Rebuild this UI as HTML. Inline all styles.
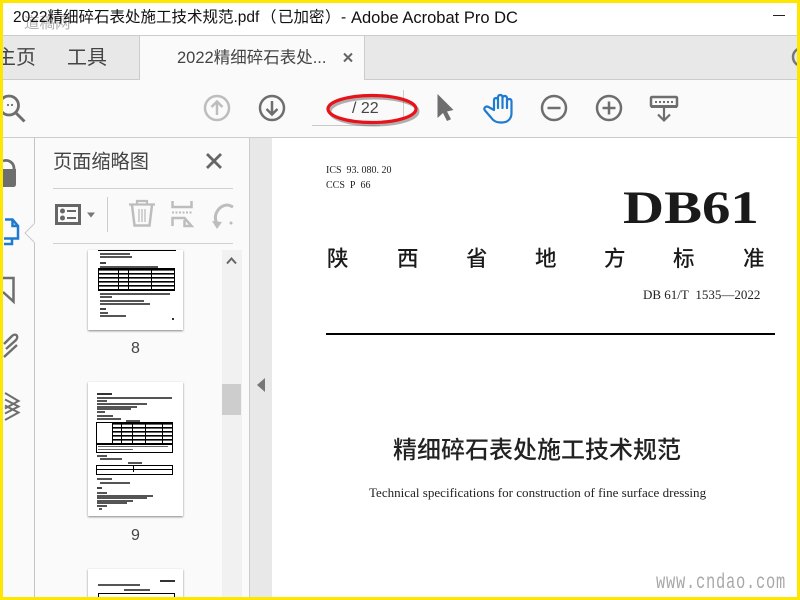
<!DOCTYPE html>
<html lang="zh">
<head>
<meta charset="utf-8">
<style>
html,body{margin:0;padding:0;width:800px;height:600px;overflow:hidden;background:#fff}
body{position:relative;font-family:"Liberation Sans","Noto Sans CJK SC",sans-serif}
.a{position:absolute;white-space:nowrap}
.r{position:absolute}
.l{position:absolute;height:2px;background:#000}
.t{position:absolute;background:#000;height:2px}
svg{position:absolute;overflow:visible}
.tt{font-size:15.5px;line-height:18px;color:#111;top:9px}
.p{font-size:21.5px;line-height:26px;color:#1a1a1a;top:246px;font-weight:500}
.tb{background-image:repeating-linear-gradient(#000 0 1px,#666 1px 2px,#fff 2px 4px)}
</style>
</head>
<body>
<!-- backgrounds -->
<div class="r" style="left:0;top:35px;width:800px;height:1px;background:#ccc"></div>
<div class="r" style="left:0;top:36px;width:800px;height:43px;background:#e8e8e8"></div>
<div class="r" style="left:0;top:79px;width:800px;height:1px;background:#ccc"></div>
<div class="r" style="left:0;top:80px;width:800px;height:57px;background:#fafafa"></div>
<div class="r" style="left:139px;top:36px;width:226px;height:44px;background:#fafafa;border-left:1px solid #ccc;border-right:1px solid #ccc;box-sizing:border-box"></div>
<div class="r" style="left:0;top:137px;width:800px;height:1px;background:#ccc"></div>
<div class="r" style="left:0;top:138px;width:249px;height:462px;background:#fafafa"></div>
<div class="r" style="left:34px;top:138px;width:1px;height:462px;background:#c4c4c4"></div>
<div class="r" style="left:249px;top:138px;width:23px;height:462px;background:#e8e8e8;border-left:1px solid #ccc;box-sizing:border-box"></div>
<div class="r" style="left:272px;top:138px;width:528px;height:462px;background:#fff"></div>

<!-- title bar -->
<div class="a" style="left:24px;top:15px;font-size:15.5px;line-height:18px;color:#888;opacity:.65">道稿网</div>
<div class="a tt" style="left:13px">2022精细碎石表处施工技术规范.pdf</div>
<div class="a tt" style="left:261px">（</div>
<div class="a tt" style="left:278px">已加密</div>
<div class="a tt" style="left:325px">）</div>
<div class="a tt" style="left:341px">-</div>
<div class="a tt" style="left:351px;font-size:16.5px">Adobe Acrobat Pro DC</div>
<div class="r" style="left:773px;top:15px;width:12px;height:1px;background:#222"></div>

<!-- tabs -->
<div class="a" style="left:-4px;top:47px;font-size:20px;line-height:22px;color:#444">主页</div>
<div class="a" style="left:67px;top:47px;font-size:20px;line-height:22px;color:#444">工具</div>
<div class="a" style="left:177px;top:48px;font-size:16.5px;line-height:20px;color:#444">2022精细碎石表处...</div>
<svg style="left:0;top:0" width="800" height="600" fill="none">
  <path d="M344 53.500l8 8M352 53.500l-8 8" stroke="#666" stroke-width="2"/>
  <!-- right edge help circle -->
  <circle cx="802" cy="57" r="9" stroke="#777" stroke-width="2.500"/>
  <!-- search -->
  <circle cx="9" cy="105.500" r="9.500" stroke="#6e6e6e" stroke-width="2.800"/>
  <path d="M16 113l8.500 8.500" stroke="#6e6e6e" stroke-width="3"/>
  <circle cx="8" cy="105" r="1.100" fill="#6e6e6e"/><circle cx="12" cy="105" r="1.100" fill="#6e6e6e"/>
  <!-- up -->
  <circle cx="217" cy="108" r="12" stroke="#bdbdbd" stroke-width="2.500"/>
  <path d="M217 115v-13M211.500 107l5.500-5.500 5.500 5.500" stroke="#bdbdbd" stroke-width="2.500"/>
  <!-- down -->
  <circle cx="272" cy="108" r="12" stroke="#6e6e6e" stroke-width="2.500"/>
  <path d="M272 101v13M266.500 109l5.500 5.500 5.500-5.500" stroke="#6e6e6e" stroke-width="2.500"/>
  <!-- page input -->
  <path d="M312 125.500h68" stroke="#c8c8c8"/>
  <path d="M403.500 90v30" stroke="#ccc"/>
  <!-- red ellipse -->
  <ellipse cx="374" cy="111.500" rx="44" ry="13.500" stroke="#555" stroke-width="3" opacity=".45"/>
  <ellipse cx="372" cy="109" rx="44" ry="13.500" stroke="#e8121a" stroke-width="3.200"/>
  <!-- arrow -->
  <path d="M437.500 94v24l5.500-5 4 8 4-1.700-4-7.800 6.500-1.500z" fill="#6e6e6e"/>
  <!-- hand -->
  <path d="M494 110V100c0-2.700 4-2.700 4 0V97c0-2.700 4.500-2.700 4.500 0v1c0-2.700 4.500-2.700 4.500 0v3c0-2.700 4.500-2.700 4.500 0v12c0 6-4 9.500-9.500 9.500h-2c-4 0-6.500-1.500-9-5l-6-7c-2-2.500 1-5 3.500-3.500z" stroke="#1e7bd0" stroke-width="2.200" stroke-linejoin="round"/>
  <path d="M498 100v8M502.500 98v10M507 101v7" stroke="#1e7bd0" stroke-width="2.200" stroke-linecap="round"/>
  <!-- minus -->
  <circle cx="554" cy="108" r="12" stroke="#6e6e6e" stroke-width="2.500"/>
  <path d="M547.500 108h13" stroke="#6e6e6e" stroke-width="2.500"/>
  <!-- plus -->
  <circle cx="609" cy="108" r="12" stroke="#6e6e6e" stroke-width="2.500"/>
  <path d="M602.500 108h13M609 101.500v13" stroke="#6e6e6e" stroke-width="2.500"/>
  <!-- keyboard arrow -->
  <rect x="651" y="97" width="26" height="9.500" rx="1" stroke="#6e6e6e" stroke-width="2.500"/>
  <path d="M651 105h26v3h-26z" fill="#6e6e6e"/>
  <path d="M655 102h18" stroke="#6e6e6e" stroke-width="2" stroke-dasharray="2 2"/>
  <path d="M664 108v12M658 114.500l6 6 6-6" stroke="#6e6e6e" stroke-width="2.200"/>

  <!-- left rail -->
  <path d="M14 172v-4a8 8 0 0 0-11-7" stroke="#6e6e6e" stroke-width="2.800"/>
  <path d="M3 169h13v15c0 2-1 3-3 3H3z" fill="#6e6e6e"/>
  <path d="M5 219.500h7.500l5.500 6.500v12.500h-6V244H4M12.500 219.500v6.500H18M4 238.500h8" stroke="#1e7bd0" stroke-width="2.500"/>
  <path d="M3 278h10.500v23.500l-10.500-9.500" stroke="#6e6e6e" stroke-width="2.500"/>
  <path d="M4 344l8-8c4-3.500 7 .5 4 4l-10 9M17 345l-13 12" stroke="#6e6e6e" stroke-width="2.400"/>
  <path d="M5 393l13.500 8-13.500 7.500" stroke="#6e6e6e" stroke-width="2"/>
  <path d="M5 399.500l13.500 7-13.500 7" stroke="#6e6e6e" stroke-width="2"/>
  <path d="M5 405.500l13.500 7-13.500 7.500" stroke="#6e6e6e" stroke-width="2"/>
  <!-- pointer on rail -->
  <path d="M35 223l-10 10 10 10" fill="#fafafa" stroke="#c8c8c8"/>
  <path d="M35 223.500v19" stroke="#fafafa" stroke-width="1.500"/>

  <!-- panel close -->
  <path d="M207 154l14 14M221 154l-14 14" stroke="#666" stroke-width="2.800"/>
  <!-- panel toolbar -->
  <rect x="56.500" y="205.500" width="23" height="18" stroke="#666" stroke-width="3"/>
  <circle cx="62.500" cy="211" r="2.500" fill="#666"/><circle cx="62.500" cy="218" r="2.500" fill="#666"/>
  <path d="M67 211h9M67 218h9" stroke="#666" stroke-width="2"/>
  <path d="M87 212.500h8l-4 5z" fill="#777"/>
  <path d="M107.500 197v35" stroke="#ccc"/>
  <!-- trash -->
  <path d="M129 204.500h26M137 204v-3h10v3" stroke="#bdbdbd" stroke-width="2.200"/>
  <path d="M132 205l2.500 20.500h15l2.500-20.500" stroke="#bdbdbd" stroke-width="2.500"/>
  <path d="M139 209v13M142 209v13M145 209v13" stroke="#bdbdbd" stroke-width="1.300"/>
  <!-- split -->
  <path d="M172.500 201v6h19v-6" stroke="#bdbdbd" stroke-width="2.500"/>
  <path d="M172 212.500h21" stroke="#bdbdbd" stroke-width="2" stroke-dasharray="2 1.500"/>
  <path d="M172.500 226v-8h12l7 8h-7v-6" stroke="#bdbdbd" stroke-width="2.500"/>
  <!-- rotate -->
  <path d="M217 224c-5-10 3-19 10-19 2 0 4 1 6 2" stroke="#bdbdbd" stroke-width="3"/>
  <path d="M212 221l10 1-5 7z" fill="#bdbdbd"/>
  <circle cx="231" cy="223" r="1.500" fill="#bdbdbd"/>
  <!-- collapse arrow -->
  <path d="M265 378v14l-8-7z" fill="#777"/>
</svg>
<div class="a" style="left:352px;top:99px;font-size:16px;line-height:20px;color:#444">/ 22</div>

<!-- panel -->
<div class="a" style="left:53px;top:152px;font-size:19.2px;line-height:22px;color:#444">页面缩略图</div>
<div class="r" style="left:53px;top:188px;width:180px;height:1px;background:#d0d0d0"></div>
<div class="r" style="left:53px;top:243px;width:180px;height:1px;background:#d0d0d0"></div>

<!-- scrollbar -->
<div class="r" style="left:222px;top:250px;width:20px;height:350px;background:#f1f1f1"></div>
<div class="r" style="left:222px;top:384px;width:19px;height:31px;background:#cdcdcd"></div>
<svg style="left:0;top:0" width="800" height="600" fill="none"><path d="M227 263.500l4.500-5 4.500 5" stroke="#666" stroke-width="2"/></svg>

<!-- thumb 8 -->
<div class="r" style="left:88px;top:250px;width:95px;height:80px;background:#fff;box-shadow:0 1px 2px #888;overflow:hidden">
  <div class="t" style="left:10px;top:0;width:78px;height:1px"></div>
  <div class="t" style="left:12px;top:3px;width:30px;background:#555"></div>
  <div class="t" style="left:12px;top:6px;width:32px;background:#555"></div>
  <div class="t" style="left:12px;top:12px;width:6px;background:#444"></div>
  <div class="t" style="left:12px;top:16px;width:58px;background:#555"></div>
  <div class="r tb" style="left:10px;top:18px;width:77px;height:23px;border:1px solid #000;box-sizing:border-box"></div>
  <div class="r" style="left:30px;top:18px;width:1px;height:23px;background:#000"></div>
  <div class="r" style="left:40px;top:18px;width:1px;height:23px;background:#000"></div>
  <div class="r" style="left:63px;top:18px;width:1px;height:23px;background:#000"></div>
  <div class="t" style="left:12px;top:43px;width:70px;background:#555"></div>
  <div class="t" style="left:12px;top:46px;width:12px;background:#555"></div>
  <div class="t" style="left:12px;top:50px;width:44px;background:#555"></div>
  <div class="t" style="left:12px;top:53px;width:50px;background:#555"></div>
  <div class="t" style="left:12px;top:58px;width:6px;background:#444"></div>
  <div class="t" style="left:12px;top:62px;width:8px;background:#555"></div>
  <div class="t" style="left:12px;top:65px;width:26px;background:#555"></div>
  <div class="r" style="left:84px;top:68px;width:2px;height:2px;background:#333"></div>
</div>
<div class="a" style="left:131px;top:341px;font-size:16px;line-height:16px;color:#444">8</div>

<!-- thumb 9 -->
<div class="r" style="left:88px;top:382px;width:95px;height:134px;background:#fff;box-shadow:0 1px 2px #888;overflow:hidden">
  <div class="t" style="left:9px;top:11px;width:15px;background:#333"></div>
  <div class="t" style="left:9px;top:15px;width:75px;background:#555"></div>
  <div class="t" style="left:9px;top:18px;width:10px;background:#555"></div>
  <div class="t" style="left:9px;top:21px;width:50px;background:#555"></div>
  <div class="t" style="left:9px;top:24px;width:40px;background:#555"></div>
  <div class="t" style="left:9px;top:26px;width:34px;background:#555"></div>
  <div class="t" style="left:9px;top:29px;width:8px;background:#555"></div>
  <div class="t" style="left:9px;top:33px;width:16px;background:#555"></div>
  <div class="t" style="left:9px;top:36px;width:24px;background:#555"></div>
  <div class="t" style="left:38px;top:38px;width:14px;background:#555"></div>
  <div class="r tb" style="left:8px;top:40px;width:77px;height:30px;border:1px solid #000;box-sizing:border-box"></div>
  <div class="r" style="left:9px;top:41px;width:15px;height:20px;background:#fff"></div>
  <div class="r" style="left:24px;top:40px;width:1px;height:30px;background:#000"></div>
  <div class="r" style="left:33px;top:40px;width:1px;height:30px;background:#000"></div>
  <div class="r" style="left:44px;top:40px;width:1px;height:30px;background:#000"></div>
  <div class="r" style="left:57px;top:40px;width:1px;height:30px;background:#000"></div>
  <div class="r" style="left:74px;top:40px;width:1px;height:30px;background:#000"></div>
  <div class="r" style="left:8px;top:62px;width:77px;height:9px;background:#fff;border:1px solid #000;box-sizing:border-box"></div>
  <div class="t" style="left:10px;top:64px;width:70px;background:#666;height:1px"></div>
  <div class="t" style="left:10px;top:67px;width:35px;background:#666;height:1px"></div>
  <div class="t" style="left:9px;top:73px;width:10px;background:#555"></div>
  <div class="t" style="left:12px;top:76px;width:22px;background:#555"></div>
  <div class="t" style="left:40px;top:80px;width:14px;background:#555"></div>
  <div class="r" style="left:8px;top:83px;width:77px;height:10px;border:1px solid #000;box-sizing:border-box;background:linear-gradient(#fff 0 3px,#000 3px 4px,#fff 4px)"></div>
  <div class="r" style="left:45px;top:83px;width:1px;height:7px;background:#000"></div>
  <div class="t" style="left:9px;top:96px;width:15px;background:#555"></div>
  <div class="t" style="left:12px;top:100px;width:30px;background:#555"></div>
  <div class="t" style="left:9px;top:105px;width:5px;background:#444"></div>
  <div class="t" style="left:9px;top:110px;width:10px;background:#555"></div>
  <div class="t" style="left:9px;top:113px;width:56px;background:#555"></div>
  <div class="t" style="left:9px;top:115px;width:50px;background:#555"></div>
  <div class="t" style="left:9px;top:118px;width:36px;background:#555"></div>
  <div class="t" style="left:9px;top:120px;width:30px;background:#555"></div>
  <div class="t" style="left:9px;top:123px;width:10px;background:#555"></div>
  <div class="t" style="left:11px;top:126px;width:3px;background:#555"></div>
</div>
<div class="a" style="left:131px;top:528px;font-size:16px;line-height:16px;color:#444">9</div>

<!-- thumb 10 -->
<div class="r" style="left:88px;top:569px;width:95px;height:31px;background:#fff;box-shadow:0 1px 2px #888;overflow:hidden">
  <div class="t" style="left:72px;top:11px;width:15px;background:#333"></div>
  <div class="t" style="left:10px;top:15px;width:42px;background:#555"></div>
  <div class="t" style="left:36px;top:20px;width:26px;background:#555"></div>
  <div class="r" style="left:10px;top:24px;width:77px;height:12px;border:1px solid #000;box-sizing:border-box"></div>
</div>

<!-- document -->
<div class="a" style="left:326px;top:164px;font-family:'Liberation Serif',serif;font-size:10px;line-height:14px;color:#222">ICS&nbsp;&nbsp;93. 080. 20</div>
<div class="a" style="left:326px;top:179px;font-family:'Liberation Serif',serif;font-size:10px;line-height:14px;color:#222">CCS&nbsp;&nbsp;P&nbsp;&nbsp;66</div>
<div class="a" style="left:623px;top:181px;font-family:'Liberation Serif',serif;font-weight:bold;font-size:47px;line-height:54px;color:#1a1a1a;transform:scaleX(1.21);transform-origin:0 0">DB61</div>
<div class="a p" style="left:327px">陕</div>
<div class="a p" style="left:397px">西</div>
<div class="a p" style="left:466px">省</div>
<div class="a p" style="left:535px">地</div>
<div class="a p" style="left:604px">方</div>
<div class="a p" style="left:673px">标</div>
<div class="a p" style="left:743px">准</div>
<div class="a" style="left:643px;top:287px;font-family:'Liberation Serif',serif;font-size:13px;line-height:15px;color:#222">DB 61/T&nbsp;&nbsp;1535—2022</div>
<div class="l" style="left:326px;top:333px;width:449px"></div>
<div class="a" style="left:393px;top:437px;font-size:24px;line-height:28px;color:#222;font-weight:500">精细碎石表处施工技术规范</div>
<div class="a" style="left:369px;top:485px;font-family:'Liberation Serif',serif;font-size:13.050px;line-height:16px;color:#222">Technical specifications for construction of fine surface dressing</div>
<div class="a" style="left:656px;top:572px;font-family:'Liberation Mono',monospace;font-size:21px;line-height:24px;color:#a8a8a8;transform:scaleX(.735);transform-origin:0 0;letter-spacing:1px">www.cndao.com</div>

<!-- yellow frame -->
<div class="r" style="left:0;top:0;width:800px;height:600px;box-sizing:border-box;border:3px solid #ffe600"></div>
</body>
</html>
